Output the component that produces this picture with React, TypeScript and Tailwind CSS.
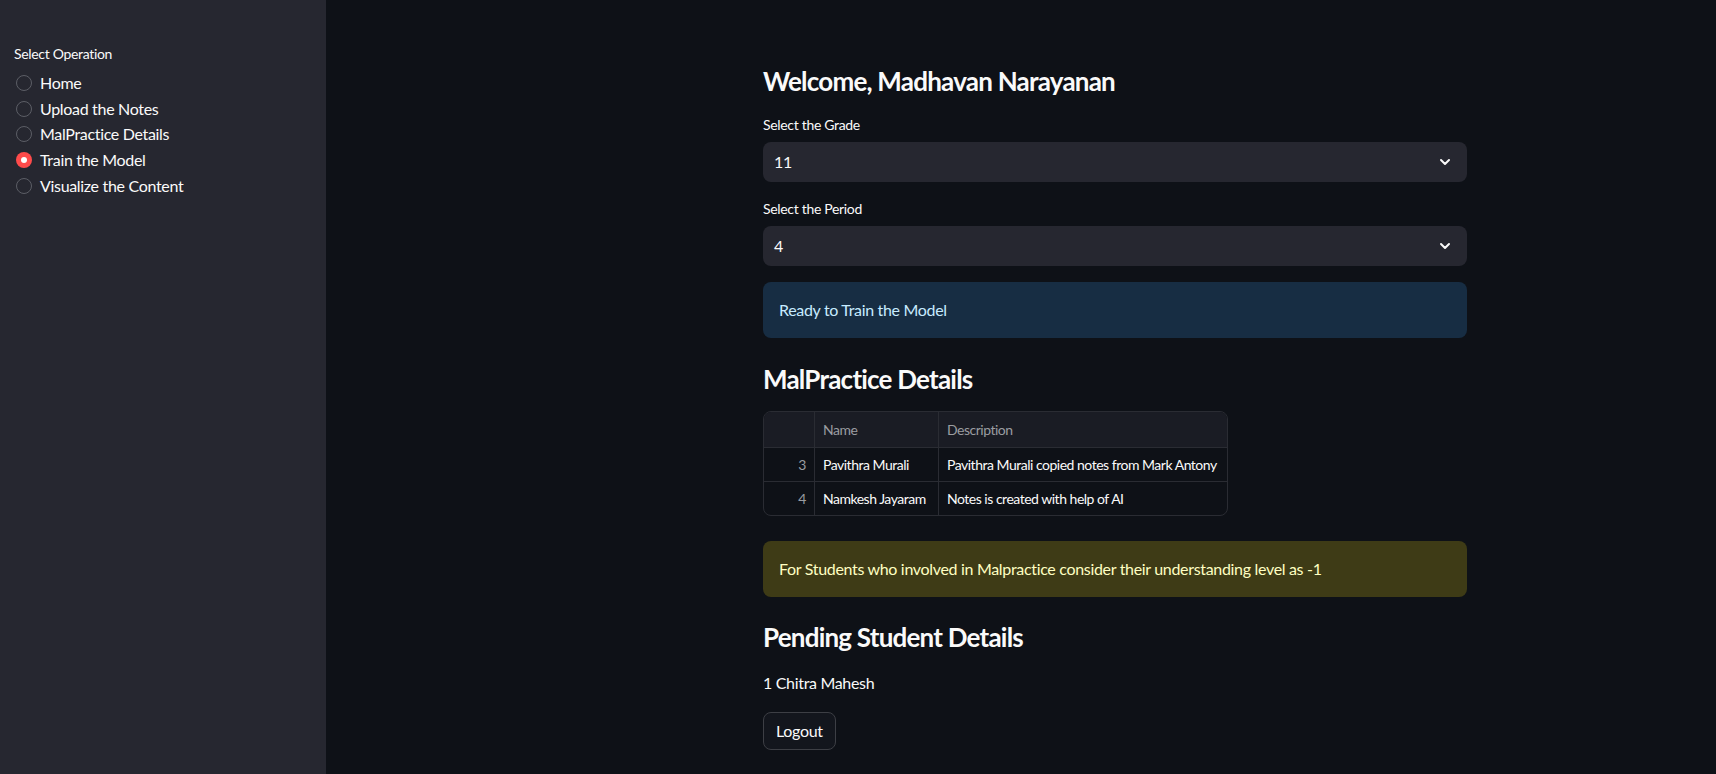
import React from 'react';

const options = ['Home', 'Upload the Notes', 'MalPractice Details', 'Train the Model', 'Visualize the Content'];

const rows = [
  { idx: 3, name: 'Pavithra Murali', desc: 'Pavithra Murali copied notes from Mark Antony' },
  { idx: 4, name: 'Namkesh Jayaram', desc: 'Notes is created with help of AI' },
];

function Chevron() {
  return (
    <svg width="16" height="16" viewBox="0 0 24 24" fill="none" stroke="#fafafa" strokeWidth="3" strokeLinecap="round" strokeLinejoin="round">
      <path d="M6 9l6 6 6-6" />
    </svg>
  );
}

function SelectBox({ value }: { value: string }) {
  return (
    <div className="h-10 rounded-lg bg-[#262730] flex items-center justify-between pl-[11px] pr-[14px]">
      <span className="text-base text-[#fafafa]">{value}</span>
      <Chevron />
    </div>
  );
}

export default function App() {
  const selected = 'Train the Model';

  return (
    <div
      className="flex w-full h-[774px] overflow-hidden text-[#fafafa] tracking-[-0.02em]"
      style={{ fontFamily: 'Lato, "Noto Sans", sans-serif' }}
    >
      {/* Sidebar */}
      <aside className="w-[326px] shrink-0 bg-[#262730] pt-[44px] px-[14px]">
        <p className="text-[14px] leading-5 mb-[6px]">Select Operation</p>
        <div className="flex flex-col">
          {options.map((o) => (
            <div key={o} className="h-[25.7px] flex items-center gap-[8px] pl-[2px]">
              {o === selected ? (
                <span className="w-4 h-4 shrink-0 rounded-full bg-[#ff4b4b] flex items-center justify-center">
                  <span className="w-[6px] h-[6px] rounded-full bg-white" />
                </span>
              ) : (
                <span className="w-4 h-4 shrink-0 rounded-full border border-[#5c5e66]" />
              )}
              <span className="text-[16px]">{o}</span>
            </div>
          ))}
        </div>
      </aside>

      {/* Main */}
      <main className="flex-1 bg-[#0e1117] pl-[437px] pt-[64px]">
        <div className="w-[704px]">
          <h3 className="text-[26px] leading-[34px] font-bold tracking-[-0.03em]">Welcome, Madhavan Narayanan</h3>

          <p className="text-[14px] leading-5 mt-[17px] mb-[7px]">Select the Grade</p>
          <SelectBox value="11" />

          <p className="text-[14px] leading-5 mt-[17px] mb-[7px]">Select the Period</p>
          <SelectBox value="4" />

          <div className="mt-4 rounded-lg bg-[#172d43] px-4 py-4 text-base leading-6 text-[#c7ebff]">
            Ready to Train the Model
          </div>

          <h3 className="text-[26px] leading-[34px] font-bold tracking-[-0.03em] mt-[24px]">MalPractice Details</h3>

          <div className="mt-[15px] w-[465px] rounded-lg border border-[#2a2c33] overflow-hidden text-[14px] tracking-[-0.035em]">
            <div className="flex h-[35px] bg-[#1a1c24] text-[#9a9ca1]">
              <div className="w-[51px] shrink-0 border-r border-[#2a2c33]" />
              <div className="w-[124px] shrink-0 border-r border-[#2a2c33] flex items-center px-2">Name</div>
              <div className="flex-1 flex items-center px-2">Description</div>
            </div>
            {rows.map((r) => (
              <div key={r.idx} className="flex h-[34px] border-t border-[#2a2c33]">
                <div className="w-[51px] shrink-0 border-r border-[#2a2c33] flex items-center justify-end pr-2 text-[#9a9ca1]">{r.idx}</div>
                <div className="w-[124px] shrink-0 border-r border-[#2a2c33] flex items-center px-2 whitespace-nowrap">{r.name}</div>
                <div className="flex-1 flex items-center px-2 whitespace-nowrap">{r.desc}</div>
              </div>
            ))}
          </div>

          <div className="mt-[25px] rounded-lg bg-[#3e3b16] px-4 py-4 text-base leading-6 text-[#ffffc2]">
            For Students who involved in Malpractice consider their understanding level as -1
          </div>

          <h3 className="text-[26px] leading-[34px] font-bold tracking-[-0.03em] mt-[23px]">Pending Student Details</h3>

          <p className="text-base leading-6 mt-[17px]">1 Chitra Mahesh</p>

          <button className="mt-[17px] h-[38px] px-3 rounded-lg border border-[#3d3f45] bg-[#13161d] text-base text-[#fafafa]">
            Logout
          </button>
        </div>
      </main>
    </div>
  );
}
